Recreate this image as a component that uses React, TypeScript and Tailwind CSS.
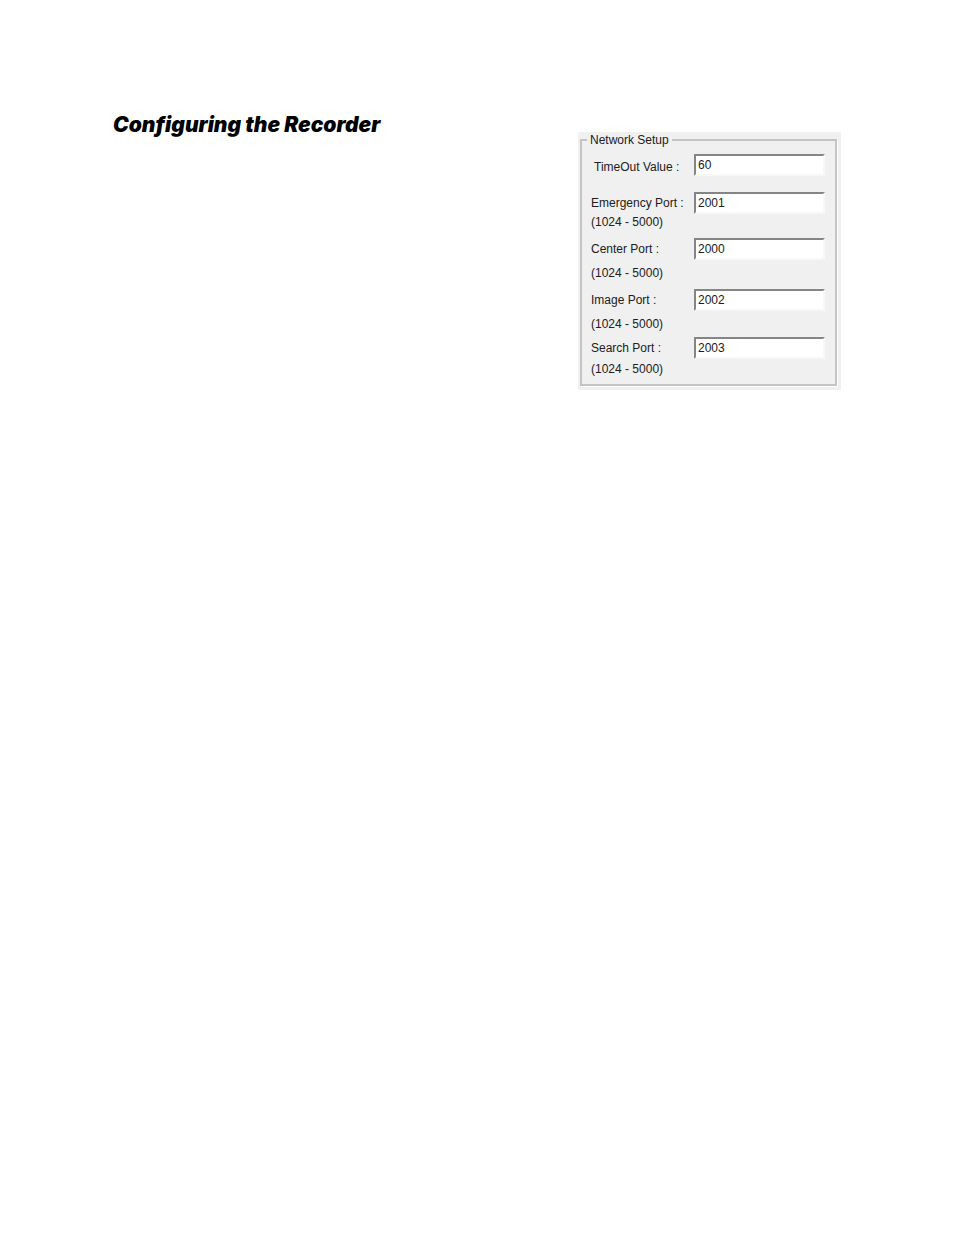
import React from "react";

type Field = {
  id: string;
  label: string;
  value: string;
  range?: string;
  rowClass: string;
  labelClass?: string;
  rangeClass?: string;
};

const RANGE = "(1024 - 5000)";

const fields: Field[] = [
  { id: "timeout", label: "TimeOut Value :", value: "60", rowClass: "mb-4", labelClass: "pl-[3px] pt-1" },
  { id: "emergency", label: "Emergency Port :", value: "2001", range: RANGE, rowClass: "mb-2" },
  { id: "center", label: "Center Port :", value: "2000", range: RANGE, rowClass: "mb-2", rangeClass: "mt-[5px]" },
  { id: "image", label: "Image Port :", value: "2002", range: RANGE, rowClass: "mb-[5px]", rangeClass: "mt-[5px]" },
  { id: "search", label: "Search Port :", value: "2003", range: RANGE, rowClass: "mb-[7px]", rangeClass: "mt-0.5" },
];

function FieldRow({ field }: { field: Field }) {
  return (
    <div className={field.rowClass}>
      <div className="flex h-[22px] items-center justify-between">
        <label htmlFor={field.id} className={field.labelClass}>
          {field.label}
        </label>
        <input
          id={field.id}
          type="text"
          defaultValue={field.value}
          aria-describedby={field.range ? `${field.id}-range` : undefined}
          className="h-[22px] w-[131px] border-2 border-t-[#858585] border-r-[#f8f8f8] border-b-[#f8f8f8] border-l-[#858585] bg-white px-0.5 leading-4 outline-none"
        />
      </div>
      {field.range && (
        <p id={`${field.id}-range`} className={field.rangeClass}>
          {field.range}
        </p>
      )}
    </div>
  );
}

export default function App() {
  return (
    <main className="min-h-screen bg-white px-[113px] pt-28 text-black">
      <div className="flex items-start justify-between">
        <h1 className="font-['Inter',sans-serif] text-[21px] leading-[26px] font-black italic">
          Configuring the Recorder
        </h1>
        <form className="mt-5 w-[263px] bg-[#f0f0f0] pr-1 pb-1 pl-0.5 font-['Liberation_Sans',sans-serif] text-xs leading-4 text-[#202020]">
          <fieldset className="border-2 border-[#c4c4c4] pr-2.5 pl-[9px] shadow-[1px_1px_0_#ffffff]">
            <legend className="-ml-1 px-[3px]">Network Setup</legend>
            <div className="pt-1.5">
              {fields.map((field) => (
                <FieldRow key={field.id} field={field} />
              ))}
            </div>
          </fieldset>
        </form>
      </div>
    </main>
  );
}
